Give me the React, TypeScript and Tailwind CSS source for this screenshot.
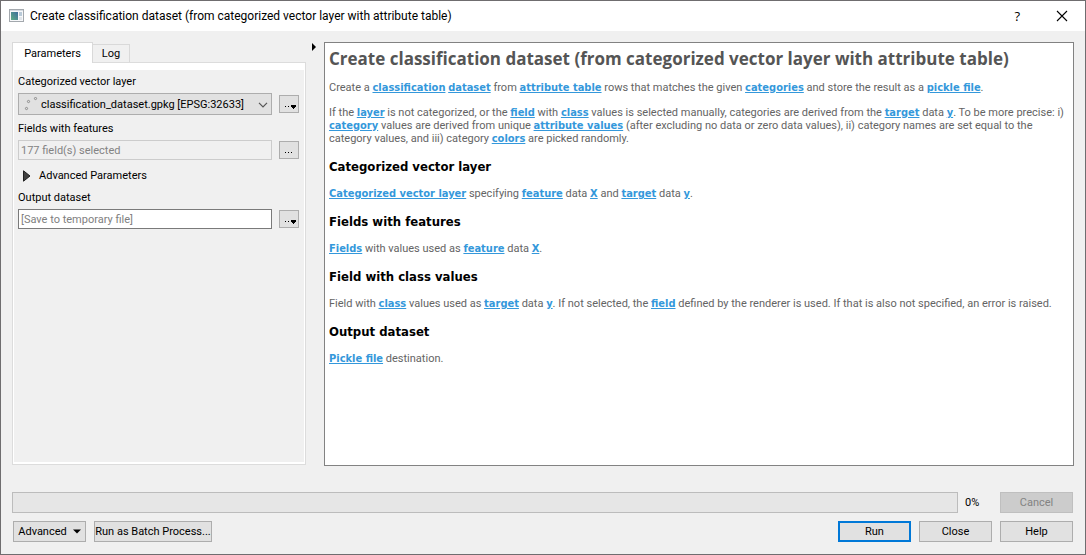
import type { ReactNode } from "react";

function TermLink({ children }: { children: ReactNode }) {
  return (
    <a
      href="#"
      className="font-['DejaVu_Sans_Condensed','DejaVu_Sans',sans-serif] leading-[11px] font-bold text-[#3498db] underline"
    >
      {children}
    </a>
  );
}

function HelpHeading({ children }: { children: ReactNode }) {
  return (
    <h3 className="mt-[14px] mb-3 font-['DejaVu_Sans_Condensed','DejaVu_Sans',sans-serif] text-[13px] leading-4 font-bold text-black">
      {children}
    </h3>
  );
}

const buttonClass = "h-[21px] w-[73px] border border-[#adadad] bg-[#e1e1e1]";

function ToolButton({ label, menu }: { label: string; menu?: boolean }) {
  return (
    <button
      type="button"
      aria-label={label}
      className="flex h-[18px] w-5 shrink-0 items-center justify-center border border-[#adadad] bg-[#e1e1e1]"
    >
      <svg width="14" height="12" viewBox="0 0 14 12" shapeRendering="crispEdges" aria-hidden="true">
        {menu ? (
          <path d="M3 8h1v1H3zM6 8h1v1H6zM9 7h5v1H9zM9 8h5v1H9zM10 9h3v1h-3zM11 10h1v1h-1z" />
        ) : (
          <path d="M3 8h1v1H3zM6 8h1v1H6zM9 8h1v1H9z" />
        )}
      </svg>
    </button>
  );
}

export default function App() {
  return (
    <div className="flex min-h-screen flex-col border border-[#6f6d6f] bg-[#f0f0f0] font-[Roboto,sans-serif] text-[11px] leading-[13px] text-black">
      <header className="flex h-[30px] items-center bg-white pr-[17px] pl-2 text-[12px]">
        <svg width="15" height="13" viewBox="0 0 15 13" className="mr-[6px] mb-[2px]" aria-hidden="true">
          <defs>
            <linearGradient id="appIcon" x1="0" y1="1" x2="1" y2="0">
              <stop offset="0" stopColor="#5fae86" />
              <stop offset="1" stopColor="#3d6d9c" />
            </linearGradient>
          </defs>
          <rect x="0.5" y="0.5" width="14" height="12" fill="#f7f8fa" stroke="#a3a8ad" />
          <rect x="1" y="1" width="13" height="1" fill="#d5dbe2" />
          <rect x="2" y="3" width="7" height="8" fill="url(#appIcon)" />
          <rect x="10" y="3" width="3" height="4" fill="#b9cad8" />
          <rect x="10" y="8" width="3" height="3" fill="#e0e5ea" />
        </svg>
        <h1 className="flex-1">Create classification dataset (from categorized vector layer with attribute table)</h1>
        <button type="button" aria-label="Help" className="mr-9 font-['Open_Sans',sans-serif] text-[13px]">
          ?
        </button>
        <button type="button" aria-label="Close window">
          <svg width="12" height="12" viewBox="0 0 12 12" stroke="#000" strokeWidth="1.1" className="mb-px" aria-hidden="true">
            <path d="M1 1l10 10M11 1L1 11" />
          </svg>
        </button>
      </header>

      <main className="flex flex-1 pt-[11px] pr-[11px] pl-[11px]">
        <section className="mb-px flex w-[294px] shrink-0 flex-col">
          <div role="tablist" className="flex h-5 items-end">
            <button
              type="button"
              role="tab"
              aria-selected="true"
              className="relative -mb-px h-[21px] w-[81px] self-start border border-b-0 border-[#d9d9d9] bg-white"
            >
              Parameters
            </button>
            <button
              type="button"
              role="tab"
              aria-selected="false"
              className="h-[18px] w-[37px] border border-b-0 border-l-0 border-[#d9d9d9]"
            >
              Log
            </button>
          </div>
          <div className="flex flex-1 flex-col border border-[#dcdcdc] bg-white px-px pt-[7px] pb-[2px]">
            <form className="flex flex-1 flex-col bg-[#f0f0f0] pt-[5px] pr-[5px] pl-1">
              <label htmlFor="layer">Categorized vector layer</label>
              <div className="mt-[5px] flex items-center gap-[7px]">
                <div className="relative flex-1">
                  <select
                    id="layer"
                    className="block h-[22px] w-full appearance-none border border-[#adadad] bg-[#e1e1e1] pl-[22px]"
                  >
                    <option>classification_dataset.gpkg [EPSG:32633]</option>
                  </select>
                  <svg
                    width="14"
                    height="14"
                    viewBox="0 0 14 14"
                    fill="none"
                    stroke="#8a8a8a"
                    className="pointer-events-none absolute top-1 left-[6px]"
                    aria-hidden="true"
                  >
                    <circle cx="2.5" cy="11.5" r="1.1" />
                    <circle cx="4.5" cy="4.5" r="1.1" />
                    <circle cx="11.5" cy="1.5" r="1.1" />
                  </svg>
                  <svg
                    width="10"
                    height="6"
                    viewBox="0 0 10 6"
                    fill="none"
                    stroke="#555"
                    strokeWidth="1.2"
                    className="pointer-events-none absolute top-[9px] right-1"
                    aria-hidden="true"
                  >
                    <path d="M1 0.8l4 4 4-4" />
                  </svg>
                </div>
                <ToolButton label="Layer options" menu />
              </div>
              <label htmlFor="fields" className="mt-[7px]">
                Fields with features
              </label>
              <div className="mt-[5px] flex items-center gap-[7px]">
                <input
                  id="fields"
                  disabled
                  value="177 field(s) selected"
                  className="h-5 min-w-0 flex-1 border border-[#cccccc] bg-[#f0f0f0] px-[2px] text-[#838383]"
                />
                <ToolButton label="Choose fields" />
              </div>
              <button type="button" className="mt-[9px] flex items-center gap-2 pl-[5px]">
                <svg width="8" height="12" viewBox="0 0 8 12" aria-hidden="true">
                  <path d="M0.5 0.8L7 6 0.5 11.2z" fill="#404040" stroke="#202020" />
                </svg>
                Advanced Parameters
              </button>
              <label htmlFor="output" className="mt-[9px]">
                Output dataset
              </label>
              <div className="mt-[5px] flex items-center gap-[7px]">
                <input
                  id="output"
                  placeholder="[Save to temporary file]"
                  className="h-5 min-w-0 flex-1 border border-[#7a7a7a] bg-white px-[2px] placeholder:text-[#808080]"
                />
                <ToolButton label="Output options" menu />
              </div>
            </form>
          </div>
        </section>

        <button type="button" aria-label="Collapse help" className="w-[18px] shrink-0 self-start pl-[6px]">
          <svg width="4" height="8" viewBox="0 0 4 8" className="mt-px" aria-hidden="true">
            <path d="M0 0l4 4-4 4z" />
          </svg>
        </button>

        <article className="min-w-0 flex-1 border border-[#828282] bg-white pt-[6px] pr-1 pl-1 text-[#646464]">
          <h2 className="font-['Open_Sans',sans-serif] text-[17px] leading-5 font-bold text-[#555555]">
            Create classification dataset (from categorized vector layer with attribute table)
          </h2>
          <p className="mt-3">
            Create a <TermLink>classification</TermLink> <TermLink>dataset</TermLink> from{" "}
            <TermLink>attribute table</TermLink> rows that matches the given <TermLink>categories</TermLink> and store
            the result as a <TermLink>pickle file</TermLink>.
          </p>
          <p className="mt-3">
            If the <TermLink>layer</TermLink> is not categorized, or the <TermLink>field</TermLink> with{" "}
            <TermLink>class</TermLink> values is selected manually, categories are derived from the{" "}
            <TermLink>target</TermLink> data <TermLink>y</TermLink>. To be more precise: i){" "}
            <TermLink>category</TermLink> values are derived from unique <TermLink>attribute values</TermLink> (after
            excluding no data or zero data values), ii) category names are set equal to the category values, and iii)
            category <TermLink>colors</TermLink> are picked randomly.
          </p>
          <HelpHeading>Categorized vector layer</HelpHeading>
          <p>
            <TermLink>Categorized vector layer</TermLink> specifying <TermLink>feature</TermLink> data{" "}
            <TermLink>X</TermLink> and <TermLink>target</TermLink> data <TermLink>y</TermLink>.
          </p>
          <HelpHeading>Fields with features</HelpHeading>
          <p>
            <TermLink>Fields</TermLink> with values used as <TermLink>feature</TermLink> data <TermLink>X</TermLink>.
          </p>
          <HelpHeading>Field with class values</HelpHeading>
          <p>
            Field with <TermLink>class</TermLink> values used as <TermLink>target</TermLink> data{" "}
            <TermLink>y</TermLink>. If not selected, the <TermLink>field</TermLink> defined by the renderer is used. If
            that is also not specified, an error is raised.
          </p>
          <HelpHeading>Output dataset</HelpHeading>
          <p>
            <TermLink>Pickle file</TermLink> destination.
          </p>
        </article>
      </main>

      <footer className="pt-[26px] pr-3 pb-3 pl-[11px]">
        <div className="flex items-center">
          <div
            role="progressbar"
            aria-label="Progress"
            aria-valuenow={0}
            className="h-[21px] flex-1 border border-[#bcbcbc] bg-[#e6e6e6]"
          />
          <span className="w-[42px] pl-[7px]">0%</span>
          <button type="button" disabled className="h-[21px] w-[73px] border border-[#bfbfbf] bg-[#cccccc] text-[#838383]">
            Cancel
          </button>
        </div>
        <div className="mt-2 flex items-center gap-2 pl-px">
          <button
            type="button"
            className="flex h-[21px] w-[73px] items-center justify-center gap-[6px] border border-[#adadad] bg-[#e1e1e1]"
          >
            Advanced
            <svg width="8" height="5" viewBox="0 0 8 5" aria-hidden="true">
              <path d="M0 0.5h8l-4 4z" />
            </svg>
          </button>
          <button type="button" className="h-[21px] w-[118px] border border-[#adadad] bg-[#e1e1e1] whitespace-nowrap">
            Run as Batch Process...
          </button>
          <div className="flex-1" />
          <button type="button" className="h-[21px] w-[73px] border-2 border-[#0078d7] bg-[#e1e1e1]">
            Run
          </button>
          <button type="button" className={buttonClass}>
            Close
          </button>
          <button type="button" className={buttonClass}>
            Help
          </button>
        </div>
      </footer>
    </div>
  );
}
